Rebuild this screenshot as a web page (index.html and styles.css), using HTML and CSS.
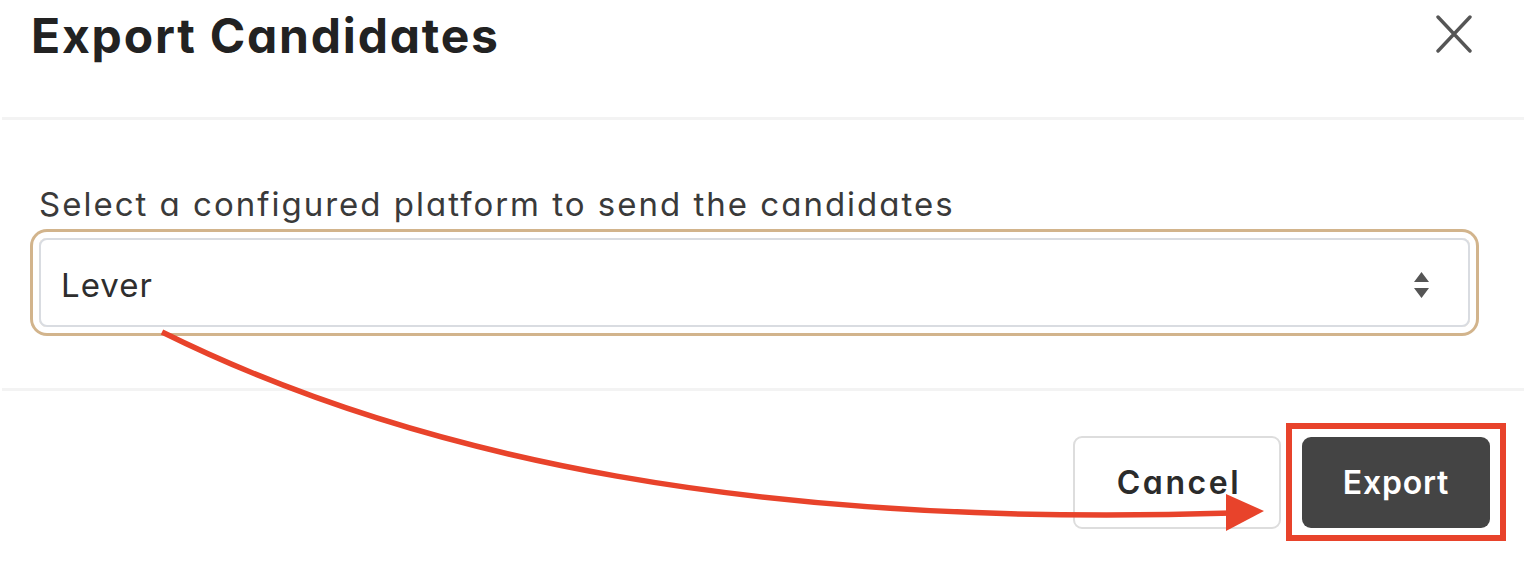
FILE: index.html
```html
<!DOCTYPE html>
<html lang="en">
<head>
<meta charset="utf-8">
<title>Export Candidates</title>
<link rel="stylesheet" href="styles.css">
</head>
<body>
<div class="modal">
  <div class="modal-header">
    <h1 class="modal-title">Export Candidates</h1>
    <button class="close-btn" aria-label="Close">
      <svg width="36" height="38" viewBox="0 0 36 38"><path d="M2 2 L34 36 M34 2 L2 36" stroke="#555" stroke-width="3.4" stroke-linecap="round" fill="none"/></svg>
    </button>
  </div>
  <div class="divider"></div>
  <div class="modal-body">
    <label class="field-label">Select a configured platform to send the candidates</label>
    <div class="select">
      <span class="select-value">Lever</span>
      <svg class="select-arrows" width="17" height="26" viewBox="0 0 17 26"><path d="M8.5 0 L16 10 L1 10 Z M1 16 L16 16 L8.5 26 Z" fill="#555"/></svg>
    </div>
  </div>
  <div class="divider"></div>
  <div class="modal-footer">
    <button class="btn btn-cancel">Cancel</button>
    <button class="btn btn-export">Export</button>
  </div>
  <div class="highlight-box"></div>
  <svg class="annotation" width="1524" height="568" viewBox="0 0 1524 568">
    <path d="M162 332 C 420 460, 760 528, 1232 513" stroke="#e8432b" stroke-width="5.5" fill="none"/>
    <path d="M1226 494 L1264 511 L1226 531 Z" fill="#e8432b"/>
  </svg>
</div>
</body>
</html>
```

FILE: styles.css
```css
* { box-sizing: border-box; }
html, body { margin: 0; padding: 0; background: #fff; }
body {
  width: 1524px;
  height: 568px;
  overflow: hidden;
  font-family: "Inter", "Open Sans", sans-serif;
  font-feature-settings: "cv11" 1, "ss02" 0;
  color: #333;
}
.modal { position: relative; width: 1524px; height: 568px; }
.modal-header {
  display: flex;
  justify-content: space-between;
  align-items: flex-start;
  height: 117px;
  padding: 0 52px 0 31px;
}
.modal-title {
  margin: 0;
  font-size: 48px;
  line-height: 71px;
  font-weight: 700;
  letter-spacing: 1.8px;
  color: #222;
}
.close-btn {
  margin-top: 15px;
  padding: 0;
  border: 0;
  background: none;
  width: 36px;
  height: 38px;
  display: flex;
}
.divider {
  margin-left: 2px;
  height: 3px;
  background: #f3f3f3;
}
.modal-body {
  padding: 64px 54px 61px 39px;
  display: flex;
  flex-direction: column;
}
.field-label {
  font-size: 33px;
  line-height: 40px;
  letter-spacing: 2px;
  color: #3a3a3a;
}
.select {
  margin-top: 14px;
  height: 89px;
  border: 2px solid #d9dce1;
  border-radius: 8px;
  box-shadow: 0 0 0 6px #fff, 0 0 0 9px #d2b48c;
  display: flex;
  align-items: center;
  justify-content: space-between;
  padding: 4px 38px 0 20px;
}
.select-value {
  font-size: 33px;
  letter-spacing: 1px;
  color: #2e2e2e;
}
.modal-footer {
  display: flex;
  justify-content: flex-end;
  align-items: center;
  gap: 21px;
  padding: 45px 34px 0 0;
}
.btn {
  font-family: inherit;
  font-feature-settings: "cv11" 1;
  font-size: 32px;
  font-weight: 600;
  border-radius: 9px;
  display: flex;
  align-items: center;
  justify-content: center;
  padding: 0;
}
.btn-cancel {
  width: 208px;
  height: 93px;
  background: #fff;
  border: 2px solid #dddddd;
  color: #2b2b2b;
  letter-spacing: 2.6px;
  padding-left: 4px;
}
.btn-export {
  width: 188px;
  height: 91px;
  background: #444;
  border: 0;
  color: #fff;
  letter-spacing: 0.8px;
}
.highlight-box {
  position: absolute;
  left: 1286px;
  top: 423px;
  width: 220px;
  height: 118px;
  border: 6px solid #e8432b;
}
.annotation {
  position: absolute;
  left: 0;
  top: 0;
  pointer-events: none;
}
```
